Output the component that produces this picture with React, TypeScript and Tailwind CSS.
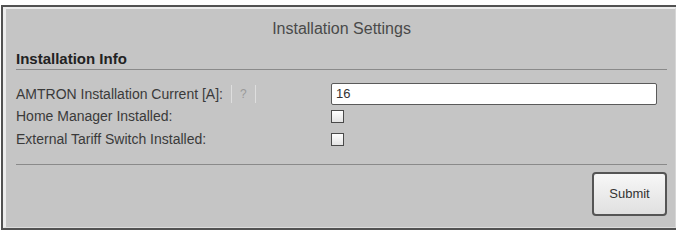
import React from 'react';

// Installation settings panel — grey form box with etched borders.

const FONT = { fontFamily: '"Liberation Sans", Arial, sans-serif' };

function Checkbox() {
  return (
    <span className="block h-[13px] w-[13px] border border-[#4a4a4a] bg-gradient-to-b from-[#ffffff] to-[#e4e4e4]" />
  );
}

function Row({ label, children }: { label: React.ReactNode; children: React.ReactNode }) {
  return (
    <div className="flex items-center">
      <div className="flex w-[315px] items-center text-[14px] text-[#3a3a3a]">{label}</div>
      {children}
    </div>
  );
}

export default function App() {
  return (
    <div className="h-[232px] w-[676px] overflow-hidden bg-white pt-[5px] pl-[1px]" style={FONT}>
      <div className="border-2 border-r-0 border-[#525252]">
        <div className="border-t-2 border-l-[3px] border-b border-r border-t-[#ececec] border-l-[#ececec] border-b-[#dcdcdc] border-r-[#d6d6d6] bg-[#c5c5c5] pl-[10px] pr-[8px] pb-[11px]">
          {/* title */}
          <div className="flex h-[40px] items-center justify-center text-[16px] text-[#4a4a4a]">
            Installation Settings
          </div>

          {/* section header */}
          <div className="h-[21px] border-b border-[#8a8a8a] text-[15px] font-bold leading-[20px] text-[#222]">
            Installation Info
          </div>

          <div className="mt-[13px]">
            <div className="h-[22px]">
              <Row
                label={
                  <>
                    <span>AMTRON Installation Current [A]:</span>
                    <span className="ml-[8px] flex h-[18px] items-center border-x border-[#dedede] px-[8px] text-[12px] text-[#9a9a9a]">
                      ?
                    </span>
                  </>
                }
              >
                <div className="flex h-[22px] w-[326px] items-center rounded-[2px] border border-[#5a5a5a] bg-white pl-[4px] text-[13px] text-[#333]">
                  16
                </div>
              </Row>
            </div>
            <div className="flex h-[23px] items-center">
              <Row label="Home Manager Installed:">
                <Checkbox />
              </Row>
            </div>
            <div className="flex h-[23px] items-center">
              <Row label="External Tariff Switch Installed:">
                <Checkbox />
              </Row>
            </div>
          </div>

          <div className="mt-[13px] h-px bg-[#8a8a8a]" />

          <div className="mt-[7px] flex justify-end">
            <button className="flex h-[44px] w-[75px] items-center justify-center rounded-[4px] border-2 border-[#555] bg-gradient-to-b from-[#f7f7f7] to-[#e0e0e0] text-[13px] text-[#333]">
              Submit
            </button>
          </div>
        </div>
      </div>
    </div>
  );
}
